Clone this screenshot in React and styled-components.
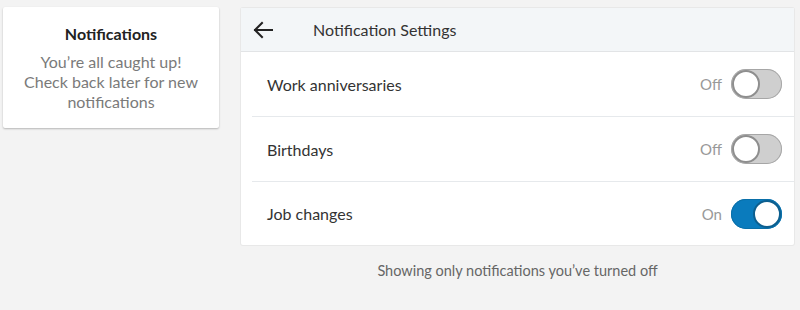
import React, { useState } from "react";
import styled, { createGlobalStyle } from "styled-components";

const GlobalStyle = createGlobalStyle`
  html, body {
    margin: 0;
    padding: 0;
    background: #f3f3f3;
    font-family: Lato, "Open Sans", sans-serif;
  }
`;

const Page = styled.div`
  display: flex;
  align-items: flex-start;
  gap: 22px;
  padding: 7px 6px 0 3px;
  height: 310px;
  box-sizing: border-box;
`;

const SideCard = styled.div`
  width: 216px;
  box-sizing: border-box;
  background: white;
  border-radius: 2px;
  box-shadow: 0 1px 2px rgba(0, 0, 0, 0.25);
  padding: 16px 8px 16px;
  text-align: center;
`;

const SideTitle = styled.div`
  font-size: 16px;
  font-weight: bold;
  color: #222;
  line-height: 22px;
  margin-bottom: 7px;
`;

const SideText = styled.div`
  font-size: 16px;
  color: #7a7a7a;
  line-height: 20px;
`;

const Column = styled.div`
  flex: 1;
  display: flex;
  flex-direction: column;
`;

const Panel = styled.div`
  background: white;
  border-radius: 2px;
  box-shadow: 0 0 0 1px #e8e8e8;
  margin-top: 1px;
`;

const Header = styled.div`
  display: flex;
  align-items: center;
  height: 43px;
  background: #f3f6f8;
  border-bottom: 1px solid #e2e4e6;
  padding-left: 11px;
`;

const BackButton = styled.button`
  display: flex;
  align-items: center;
  border: none;
  background: none;
  padding: 0;
  margin-right: 39px;
  cursor: pointer;
`;

const HeaderTitle = styled.div`
  font-size: 16px;
  color: #333;
`;

const Row = styled.div`
  display: flex;
  align-items: center;
  height: ${(p) => (p.last ? "63px" : "64px")};
  margin-left: 11px;
  padding: 0 12px 0 15px;
  border-bottom: ${(p) => (p.last ? "none" : "1px solid #e6e9ec")};
`;

const Label = styled.div`
  flex: 1;
  font-size: 16px;
  color: #333;
`;

const State = styled.span`
  font-size: 15px;
  color: #999;
  margin-right: 9px;
`;

const Track = styled.button`
  position: relative;
  width: 51px;
  height: 30px;
  border-radius: 15px;
  border: none;
  padding: 0;
  cursor: pointer;
  background: ${(p) => (p.on ? "#0a7bbd" : "#cfcfcf")};
  box-shadow: inset 0 0 0 1px ${(p) => (p.on ? "#0a6fa8" : "#a6a6a6")};
`;

const Knob = styled.span`
  position: absolute;
  top: 1px;
  left: ${(p) => (p.on ? "22px" : "1px")};
  width: 24px;
  height: 24px;
  border-radius: 50%;
  background: white;
  border: 2px solid ${(p) => (p.on ? "#0d5f8f" : "#8e8e8e")};
`;

const Footer = styled.div`
  text-align: center;
  font-size: 14.5px;
  color: #666;
  margin-top: 17px;
`;

const ArrowLeft = () => (
  <svg width="22" height="18" viewBox="0 0 22 18">
    <path
      d="M20 9H3M10 2L3 9l7 7"
      fill="none"
      stroke="#222"
      strokeWidth="2"
      strokeLinecap="square"
    />
  </svg>
);

const settings = [
  { name: "Work anniversaries", on: false },
  { name: "Birthdays", on: false },
  { name: "Job changes", on: true },
];

const App = () => {
  const [items, setItems] = useState(settings);

  const toggle = (i) => {
    setItems(items.map((it, j) => (j === i ? { ...it, on: !it.on } : it)));
  };

  return (
    <>
      <GlobalStyle />
      <Page>
        <SideCard>
          <SideTitle>Notifications</SideTitle>
          <SideText>
            You’re all caught up!
            <br />
            Check back later for new
            <br />
            notifications
          </SideText>
        </SideCard>
        <Column>
          <Panel>
            <Header>
              <BackButton>
                <ArrowLeft />
              </BackButton>
              <HeaderTitle>Notification Settings</HeaderTitle>
            </Header>
            {items.map((it, i) => (
              <Row key={it.name} last={i === items.length - 1}>
                <Label>{it.name}</Label>
                <State>{it.on ? "On" : "Off"}</State>
                <Track on={it.on} onClick={() => toggle(i)}>
                  <Knob on={it.on} />
                </Track>
              </Row>
            ))}
          </Panel>
          <Footer>Showing only notifications you’ve turned off</Footer>
        </Column>
      </Page>
    </>
  );
};

export default App;
